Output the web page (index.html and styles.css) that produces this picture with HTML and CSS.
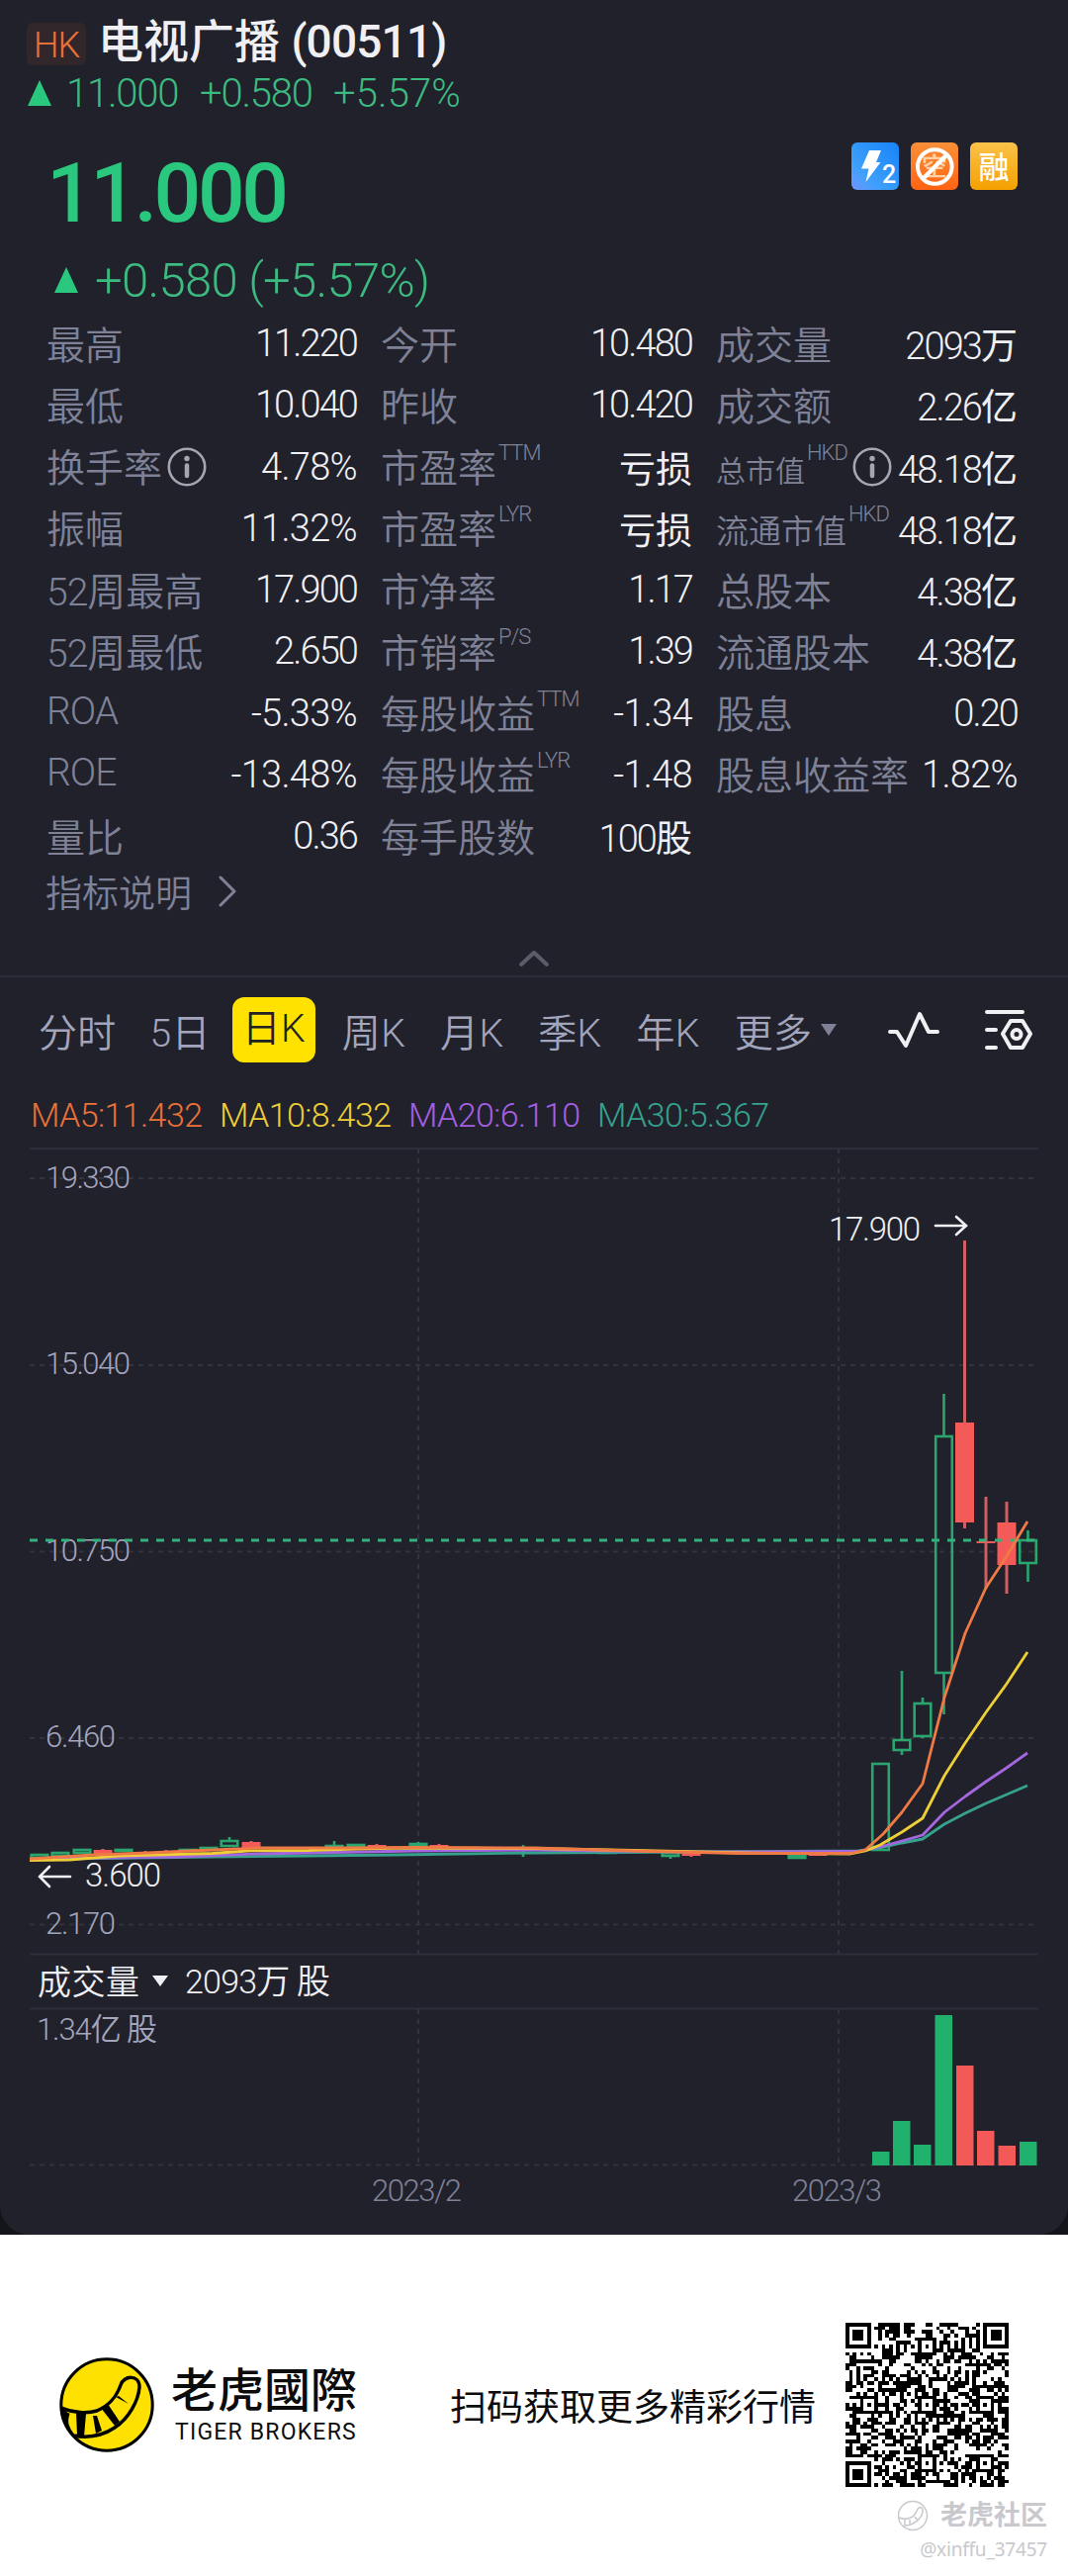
FILE: index.html
```html
<!DOCTYPE html>
<html lang="zh-CN">
<head>
    <meta charset="UTF-8">
    <meta name="viewport" content="width=device-width, initial-scale=1.0">
    <title>电视广播 (00511)</title>
    <link rel="stylesheet" href="styles.css">
</head>
<body>
    <div class="card-wrap">
    <main class="card">
        <header class="title-row">
            <span class="market">HK</span>
            <h1>电视广播 <span class="code">(00511)</span></h1>
        </header>
        <div class="sub-quote">
            <svg class="up" width="26" height="28" viewBox="0 0 26 28"><path d="M13 1L25 27H1Z"/></svg>
            <span>11.000</span>
            <span>+0.580</span>
            <span class="percent">+5.57%</span>
        </div>

        <section class="price-row">
            <div class="price">11.000</div>
            <div class="badges">
                <svg width="48" height="48" viewBox="0 0 48 48">
                    <defs><linearGradient id="blue" x1="0" y1="1" x2="1" y2="0"><stop offset="0" stop-color="#6f96ff"/><stop offset=".3" stop-color="#3fa0fb"/><stop offset="1" stop-color="#1683f8"/></linearGradient></defs>
                    <rect width="48" height="48" rx="6" fill="url(#blue)"/>
                    <path d="M18 8H30L25 20H29.500L14.500 40L17.500 26.500H10Z" fill="#fff"/>
                    <text x="31" y="41" class="badge-two">2</text>
                </svg>
                <svg width="48" height="48" viewBox="0 0 48 48">
                    <defs><linearGradient id="orange" x1="0" y1="0" x2="0" y2="1"><stop offset="0" stop-color="#f99038"/><stop offset="1" stop-color="#ff6313"/></linearGradient></defs>
                    <rect width="48" height="48" rx="6" fill="url(#orange)"/>
                    <text x="24" y="34" class="badge-short">空</text>
                    <circle cx="24.300" cy="24.500" r="17.300" fill="none" stroke="#fff" stroke-width="4"/>
                    <path d="M12.500 36.500L36.500 12.500" stroke="#fff" stroke-width="4.500"/>
                </svg>
                <svg width="48" height="48" viewBox="0 0 48 48">
                    <defs><linearGradient id="gold" x1="0" y1="0" x2="0" y2="1"><stop offset="0" stop-color="#fac34a"/><stop offset="1" stop-color="#f5a000"/></linearGradient></defs>
                    <rect width="48" height="48" rx="6" fill="url(#gold)"/>
                    <text x="24" y="36" class="badge-margin">融</text>
                </svg>
            </div>
        </section>
        <div class="change">
            <svg class="up" width="26" height="28" viewBox="0 0 26 28"><path d="M13 1L25 27H1Z"/></svg>
            <span>+0.580 (+5.57%)</span>
        </div>

        <section class="stats">
            <div class="stat"><span class="label">最高</span><span class="value">11.220</span></div>
            <div class="stat"><span class="label">今开</span><span class="value">10.480</span></div>
            <div class="stat"><span class="label">成交量</span><span class="value">2093<b>万</b></span></div>

            <div class="stat"><span class="label">最低</span><span class="value">10.040</span></div>
            <div class="stat"><span class="label">昨收</span><span class="value">10.420</span></div>
            <div class="stat"><span class="label">成交额</span><span class="value">2.26<b>亿</b></span></div>

            <div class="stat"><span class="label">换手率</span><svg class="info" width="40" height="40" viewBox="0 0 40 40"><circle cx="20" cy="20" r="18.200"/><path d="M20 18.500V29"/><circle class="dot" cx="20" cy="11.500" r="2.700"/></svg><span class="value wide">4.78%</span></div>
            <div class="stat"><span class="label">市盈率</span><sup>TTM</sup><span class="value"><b>亏损</b></span></div>
            <div class="stat"><span class="label small">总市值</span><sup>HKD</sup><svg class="info" width="40" height="40" viewBox="0 0 40 40"><circle cx="20" cy="20" r="18.200"/><path d="M20 18.500V29"/><circle class="dot" cx="20" cy="11.500" r="2.700"/></svg><span class="value">48.18<b>亿</b></span></div>

            <div class="stat"><span class="label">振幅</span><span class="value wide">11.32%</span></div>
            <div class="stat"><span class="label">市盈率</span><sup>LYR</sup><span class="value"><b>亏损</b></span></div>
            <div class="stat"><span class="label medium">流通市值</span><sup>HKD</sup><span class="value">48.18<b>亿</b></span></div>

            <div class="stat"><span class="label"><i>52</i>周最高</span><span class="value">17.900</span></div>
            <div class="stat"><span class="label">市净率</span><span class="value">1.17</span></div>
            <div class="stat"><span class="label">总股本</span><span class="value">4.38<b>亿</b></span></div>

            <div class="stat"><span class="label"><i>52</i>周最低</span><span class="value">2.650</span></div>
            <div class="stat"><span class="label">市销率</span><sup>P/S</sup><span class="value">1.39</span></div>
            <div class="stat"><span class="label">流通股本</span><span class="value">4.38<b>亿</b></span></div>

            <div class="stat"><span class="label"><i>ROA</i></span><span class="value wide">-5.33%</span></div>
            <div class="stat"><span class="label">每股收益</span><sup>TTM</sup><span class="value wide">-1.34</span></div>
            <div class="stat"><span class="label">股息</span><span class="value">0.20</span></div>

            <div class="stat"><span class="label"><i>ROE</i></span><span class="value wide">-13.48%</span></div>
            <div class="stat"><span class="label">每股收益</span><sup>LYR</sup><span class="value wide">-1.48</span></div>
            <div class="stat"><span class="label">股息收益率</span><span class="value wide">1.82%</span></div>

            <div class="stat"><span class="label">量比</span><span class="value">0.36</span></div>
            <div class="stat"><span class="label">每手股数</span><span class="value">100<b>股</b></span></div>
        </section>
        <div class="explain">
            <span>指标说明</span>
            <svg width="20" height="32" viewBox="0 0 20 32"><path d="M3 2L17 16L3 30"/></svg>
        </div>
        <div class="collapse">
            <svg width="32" height="20" viewBox="0 0 32 20"><path d="M3 16L16 4L29 16"/></svg>
        </div>

        <nav class="tabs">
            <span>分时</span>
            <span>5日</span>
            <span class="active">日K</span>
            <span>周K</span>
            <span>月K</span>
            <span>季K</span>
            <span>年K</span>
            <span class="more">更多<svg width="16" height="12" viewBox="0 0 16 12"><path d="M0 0H16L8 12Z"/></svg></span>
            <svg class="tool pulse" width="54" height="40" viewBox="0 0 54 40"><path d="M3 22H10L19 36L33 4L42 22H51"/></svg>
            <svg class="tool" width="50" height="46" viewBox="0 0 50 46"><path d="M3 5H39M3 23H12M3 41H12M27 14H39L47 27L39 41H27L19 27Z"/><circle cx="33" cy="27.500" r="4.500"/></svg>
        </nav>
        <div class="averages">
            <span class="ma5">MA5:11.432</span>
            <span class="ma10">MA10:8.432</span>
            <span class="ma20">MA20:6.110</span>
            <span class="ma30">MA30:5.367</span>
        </div>

        <!-- price and volume share one coordinate system -->
        <svg class="chart" width="1080" height="1099" viewBox="0 1160 1080 1099">
            <g class="frame">
                <path d="M30 1161H1050M30 1975.500H1050M30 2030.500H1050"/>
            </g>
            <g class="grid">
                <path d="M30 1191H1050M30 1380H1050M30 1568.500H1050M30 1757H1050M30 1945.500H1050M30 2188.500H1050"/>
                <path d="M423 1161V1975M848 1161V1975M423 2031V2188M848 2031V2188"/>
            </g>
            <g class="axis">
                <text x="46" y="1201" textLength="86">19.330</text>
                <text x="46" y="1389" textLength="86">15.040</text>
                <text x="46" y="1578" textLength="86">10.750</text>
                <text x="46" y="1766" textLength="71">6.460</text>
                <text x="46" y="1955" textLength="71">2.170</text>
            </g>
            <g id="candles"></g>
            <path class="last" d="M30 1557H1050"/>
            <g class="lines">
                <polyline class="ma30" points="30,1879 104,1878.500 215,1877 312,1876 400,1875 540,1873 700,1872 868,1871 890,1868 912,1863 933,1859 955,1844 976,1833 997,1823 1018,1814 1039,1805"/>
                <polyline class="ma20" points="30,1880 104,1878 180,1877 260,1874 312,1873 420,1871 540,1870 620,1871 700,1872 868,1871.500 890,1867 912,1861 933,1855 955,1832 976,1816 997,1801 1018,1787 1039,1772"/>
                <polyline class="ma10" points="30,1880.500 70,1880 120,1876 215,1873.500 250,1871 312,1870.500 360,1869 410,1868 540,1868.500 640,1870.500 750,1873 860,1874 875,1871 890,1865 912,1852 933,1838 955,1795 976,1762 997,1731 1018,1702 1039,1670"/>
                <polyline class="ma5" points="30,1879 95,1875 150,1873 215,1870 263,1868 312,1868 350,1868 420,1867.500 540,1868 640,1871 750,1873.500 860,1873.500 875,1870 893,1854 912,1832 933,1803 955,1716 976,1651 997,1605 1018,1573 1039,1538"/>
            </g>
            <g class="mark">
                <text x="838" y="1254" textLength="93">17.900</text>
                <path d="M946 1239H976M967 1230L977 1239L967 1248"/>
                <text x="86" y="1907" textLength="77">3.600</text>
                <path d="M71 1897H40M50 1887L40 1897L50 1907"/>
            </g>
            <g class="vol-title">
                <text x="38" y="2016" textLength="103">成交量</text>
                <path d="M154 1997H170L162 2008Z"/>
                <text x="187" y="2015" textLength="147">2093万 股</text>
            </g>
            <text class="vol-max" x="37" y="2062" textLength="122">1.34亿 股</text>
            <g id="volumes"></g>
            <g class="dates">
                <text x="376" y="2225" textLength="91">2023/2</text>
                <text x="801" y="2225" textLength="91">2023/3</text>
            </g>
        </svg>
    </main>
    </div>

    <footer class="footer">
        <svg width="96" height="96" viewBox="0 0 96 96">
            <defs><clipPath id="disc"><circle cx="48" cy="48" r="46"/></clipPath></defs>
            <circle cx="48" cy="48" r="46.200" fill="#fee100"/>
            <g clip-path="url(#disc)">
                <path d="M0 50L8 55L6 68L0 66Z"/>
                <path d="M17 56L27 57L25 80L18 79ZM34 59L38 59L43 74L37 77ZM42 51L49 47L61 65L56 69ZM57 40L60 39L70 47Z"/>
                <path class="tail" d="M2 51C14 56 28 57 38 54C52 48 58 39 62 28C65 18 81 17 81 30C80 44 70 62 56 71C44 79 30 82 14 79C9 73 5 66 9 56"/>
            </g>
            <circle cx="48" cy="48" r="46.200" fill="none" stroke="#000" stroke-width="3"/>
        </svg>
        <div class="brand">
            <strong>老虎國際</strong>
            <span>TIGER BROKERS</span>
        </div>
        <p>扫码获取更多精彩行情</p>
        <svg class="qr" id="qr" width="165" height="166" viewBox="0 0 45 45" preserveAspectRatio="none" shape-rendering="crispEdges"></svg>
        <div class="watermark">
            <div class="community">
                <svg width="32" height="32" viewBox="0 0 32 32"><circle cx="16" cy="16" r="14.500"/><path d="M2 18C10 21 18 18 20 11C22 6 27 7 26 12C25 19 17 26 7 26M8 20V25M13 20V25M18 17L21 21"/></svg>
                <span>老虎社区</span>
            </div>
            <div class="user">@xinffu_37457</div>
        </div>
    </footer>

    <script>
        // center, body top, body bottom, wick top, wick bottom, direction
        const candles = [
            [40, 1875, 1878, 1875, 1878, 'up'],
            [61, 1873, 1876, 1873, 1876, 'up'],
            [83, 1870, 1873, 1869, 1873, 'up'],
            [104, 1870, 1874, 1869, 1874, 'down'],
            [125, 1870, 1871, 1869, 1871, 'up'],
            [147, 1872, 1874, 1871, 1874, 'down'],
            [168, 1871, 1873, 1870, 1873, 'down'],
            [190, 1870, 1871, 1869, 1871, 'up'],
            [211, 1868, 1870, 1867, 1870, 'up'],
            [232, 1861, 1866, 1857, 1867, 'up'],
            [254, 1862, 1868, 1861, 1868, 'down'],
            [338, 1866, 1867, 1861, 1868, 'up'],
            [360, 1865, 1867, 1864, 1868, 'up'],
            [381, 1865, 1868, 1864, 1868, 'down'],
            [423, 1864, 1865, 1862, 1866, 'up'],
            [444, 1865, 1868, 1864, 1869, 'down'],
            [529, 1869, 1870, 1865, 1877, 'up'],
            [614, 1872, 1873, 1869, 1874, 'up'],
            [678, 1873, 1876, 1872, 1879, 'up'],
            [699, 1874, 1876, 1872, 1877, 'down'],
            [806, 1876, 1878, 1875, 1879, 'up'],
            [827, 1874, 1876, 1873, 1876, 'down'],
            [890.5, 1783, 1870, 1783, 1870, 'up'],
            [912, 1759, 1769, 1689, 1774, 'up'],
            [933, 1722, 1755, 1716, 1757, 'up'],
            [954.5, 1452, 1691, 1409, 1733, 'up'],
            [975.5, 1438, 1539, 1254, 1545, 'down'],
            [997, 1558, 1560, 1513, 1606, 'down'],
            [1018, 1539, 1582, 1518, 1611, 'down'],
            [1039.5, 1557, 1580, 1547, 1599, 'up']
        ];
        document.getElementById('candles').innerHTML = candles.map(([x, top, bottom, high, low, dir]) => {
            const wick = `M${x} ${high}V${top}M${x} ${bottom}V${low}`;
            const inset = dir === 'up' ? 1.2 : 0;
            return `<g class="${dir}"><path d="${wick}"/><rect x="${x - 9.5 + inset}" y="${top}" width="${19 - inset * 2}" height="${bottom - top}"/></g>`;
        }).join('');

        // left edge, top, direction
        const volumes = [
            [882, 2175, 'up'], [903, 2144, 'up'], [924, 2168, 'up'], [945.5, 2037, 'up'],
            [967, 2088, 'down'], [988, 2154, 'down'], [1009.5, 2169, 'down'], [1031, 2165, 'up']
        ];
        document.getElementById('volumes').innerHTML = volumes.map(([x, y, dir]) =>
            `<rect class="vol-${dir}" x="${x}" y="${y}" width="17.5" height="${2189 - y}"/>`).join('');

        // QR symbol, 45 modules a side
        const size = 45;
        const centers = [[6, 22], [22, 6], [22, 22], [22, 38], [38, 22], [38, 38]];
        let seed = 511;
        function ring(x, y, cx, cy) {
            return Math.max(Math.abs(x - cx), Math.abs(y - cy));
        }
        function isDark(x, y) {
            seed = (seed * 1103515245 + 12345) % 2147483648;
            for (const [cx, cy] of [[3, 3], [41, 3], [3, 41]]) {
                const r = ring(x, y, cx, cy);
                if (r <= 4) return r < 2 || r === 3;
            }
            for (const [cx, cy] of centers) {
                const r = ring(x, y, cx, cy);
                if (r <= 2) return r !== 1;
            }
            if (x === 6 || y === 6) return (x + y) % 2 === 0;
            return seed / 2147483648 < 0.52;
        }
        let path = '';
        for (let y = 0; y < size; y++) {
            for (let x = 0; x < size; x++) {
                if (isDark(x, y)) path += `M${x} ${y}h1v1h-1z`;
            }
        }
        document.getElementById('qr').innerHTML = `<path d="${path}"/>`;
    </script>
</body>
</html>
```

FILE: styles.css
```css
* {
    margin: 0;
    padding: 0;
    box-sizing: border-box;
}

body {
    width: 1080px;
    background: #fff;
    font-family: Roboto, 'Noto Sans CJK SC', sans-serif;
    font-weight: 350;
    color: #f0f0f4;
}

svg {
    display: block;
    flex: none;
}

.card-wrap {
    background: #14141b;
}

.card {
    height: 2259px;
    padding-top: 14px;
    background: #20212b;
    border-radius: 0 0 30px 30px;
    overflow: hidden;
}

.title-row {
    display: flex;
    align-items: center;
    height: 56px;
    padding-left: 27px;
    gap: 12px;
}

.market {
    width: 60px;
    height: 43px;
    margin-top: 4px;
    line-height: 46px;
    text-align: center;
    font-size: 36px;
    letter-spacing: -1px;
    color: #ea7139;
    background: #31272b;
    border-radius: 6px;
}

h1 {
    font-size: 46px;
    font-weight: 500;
    line-height: 56px;
    white-space: nowrap;
}

.code {
    letter-spacing: -0.8px;
}

.up {
    fill: #2ac77e;
}

.sub-quote {
    display: flex;
    align-items: center;
    height: 48px;
    padding-left: 27px;
    font-size: 40px;
    letter-spacing: -1.2px;
    color: #3dba80;
}

.sub-quote span {
    margin-left: 14px;
    width: 120px;
}

.sub-quote span + span {
    margin-left: 15px;
}

.sub-quote .percent {
    letter-spacing: 0.1px;
}

.price-row {
    display: flex;
    justify-content: space-between;
    height: 140px;
    padding: 26px 51px 0 47px;
}

.price {
    font-size: 84px;
    line-height: 104px;
    font-weight: 500;
    letter-spacing: -3.4px;
    color: #2ac77e;
}

.badges {
    display: flex;
    gap: 12px;
}

.badge-two {
    font-size: 25px;
    font-weight: 500;
    fill: #fff;
}

.badge-short {
    font-size: 26px;
    font-weight: 500;
    text-anchor: middle;
    fill: #ffd2a6;
}

.badge-margin {
    font-size: 31px;
    font-weight: 500;
    text-anchor: middle;
    fill: #fff;
}

.change {
    display: flex;
    align-items: center;
    height: 50px;
    padding-left: 54px;
    gap: 16px;
    font-size: 49px;
    letter-spacing: -0.7px;
    color: #3dba80;
}

.stats {
    display: grid;
    grid-template-columns: 314px 315px 305px;
    grid-auto-rows: 62.25px;
    column-gap: 24px;
    margin-top: 8px;
    padding-left: 47px;
}

.stat {
    display: flex;
    align-items: center;
    white-space: nowrap;
}

.label {
    margin-top: -3px;
    font-size: 39px;
    color: #7f8197;
}

.label i {
    font-style: normal;
    letter-spacing: -1px;
}

.label.small {
    font-size: 30px;
    margin-top: 5px;
}

.label.medium {
    font-size: 33px;
    margin-top: 2px;
}

sup {
    align-self: flex-start;
    margin: 3px 0 0 2px;
    font-size: 22px;
    line-height: 27px;
    letter-spacing: -1px;
    color: #7f8197;
}

.info {
    margin-left: 5px;
    fill: none;
    stroke: #a5a6b0;
    stroke-width: 2.6;
}

.info path {
    stroke-width: 4.5;
    stroke-linecap: round;
}

.info .dot {
    fill: #a5a6b0;
    stroke: none;
}

.value {
    margin-left: auto;
    font-size: 38px;
    letter-spacing: -1.9px;
}

.value.wide {
    letter-spacing: -0.7px;
}

.value b {
    font-size: 37px;
    font-weight: 400;
    letter-spacing: 0;
}

.explain {
    display: flex;
    align-items: center;
    height: 50px;
    padding-left: 46px;
    gap: 26px;
    font-size: 37px;
    color: #7f8197;
}

.explain svg,
.collapse svg {
    fill: none;
    stroke: #7f8197;
    stroke-width: 3;
    stroke-linecap: round;
    stroke-linejoin: round;
}

.collapse {
    display: flex;
    justify-content: center;
    height: 61.75px;
    padding-top: 33px;
    border-bottom: 2px solid #2b2c37;
}

.collapse svg {
    stroke: #5b5c69;
    stroke-width: 4;
}

.tabs {
    display: flex;
    align-items: center;
    height: 106px;
    padding-left: 39px;
    font-size: 39px;
    letter-spacing: 0.3px;
    color: #a3a5bd;
    white-space: nowrap;
}

.tabs span {
    margin-right: 34px;
}

.tabs .active {
    width: 84px;
    height: 66px;
    margin: 0 27px 0 -12px;
    line-height: 64px;
    text-align: center;
    color: #222;
    background: #ffe200;
    border-radius: 12px;
}

.tabs .active ~ span {
    margin-right: 35px;
}

.tabs .active ~ .more {
    display: flex;
    align-items: center;
    gap: 9px;
    margin-right: 51px;
}

.more svg {
    fill: #7f8197;
}

.tool {
    fill: none;
    stroke: #f0f0f2;
    stroke-width: 4;
    stroke-linecap: round;
    stroke-linejoin: round;
}

.pulse {
    margin-right: 44px;
}

.averages {
    display: flex;
    gap: 18px;
    height: 66px;
    padding: 0 0 0 31px;
    line-height: 66px;
    font-size: 34px;
    letter-spacing: -0.6px;
}

.averages span {
    width: 173px;
    white-space: nowrap;
}

.averages .ma5 { color: #ea7139; }
.averages .ma10 { color: #efcf38; }
.averages .ma20 { color: #a55fe2; }
.averages .ma30 { color: #36a18d; }

.frame path {
    stroke: #2d2e39;
    stroke-width: 2;
}

.grid path {
    fill: none;
    stroke: #32333d;
    stroke-width: 2;
    stroke-dasharray: 5 5;
}

.axis text {
    font-size: 31px;
    fill: #a3a5bd;
}

.last {
    stroke: #32b27a;
    stroke-width: 3;
    stroke-dasharray: 8 8;
}

.up path,
.up rect {
    stroke: #2ba56e;
    stroke-width: 2.6;
    fill: none;
}

.sub-quote .up path,
.change .up path {
    stroke: none;
    fill: #2ac77e;
}

.down path {
    stroke: #cf5f63;
    stroke-width: 3;
}

.down rect {
    fill: #f45b58;
}

.lines polyline {
    fill: none;
    stroke-width: 2.8;
    stroke-linejoin: round;
}

.lines .ma5 { stroke: #f07a45; }
.lines .ma10 { stroke: #efcf38; }
.lines .ma20 { stroke: #a567e0; }
.lines .ma30 { stroke: #36a18d; }

.mark text {
    font-size: 33px;
    fill: #f0f0f4;
}

.mark path {
    fill: none;
    stroke: #f0f0f4;
    stroke-width: 2.6;
    stroke-linecap: round;
}

.vol-title {
    font-size: 34px;
    fill: #f0f0f4;
}

.vol-max {
    font-size: 31px;
    fill: #a3a5bd;
}

.vol-up { fill: #20b26c; }
.vol-down { fill: #f25957; }

.dates text {
    font-size: 31px;
    fill: #7f8197;
}

.footer {
    position: relative;
    display: flex;
    align-items: center;
    height: 345px;
    padding-left: 60px;
    color: #0c0c0c;
}

.footer > svg,
.footer > div,
.footer > p {
    margin-bottom: 1px;
}

.tail {
    fill: none;
    stroke: #000;
    stroke-width: 3.5;
}

.brand {
    width: 190px;
    margin-left: 17px;
}

.brand strong {
    display: block;
    font-size: 47px;
    line-height: 56px;
    font-weight: 500;
    white-space: nowrap;
}

.brand span {
    display: block;
    margin-left: 4px;
    font-size: 23px;
    line-height: 28px;
    font-weight: 400;
    letter-spacing: 1.2px;
    white-space: nowrap;
}

.footer p {
    margin-left: 92px;
    font-size: 37px;
    font-weight: 400;
    white-space: nowrap;
}

.qr {
    margin-left: 30px;
}

/* overlaps the lower right corner of the footer */
.watermark {
    position: absolute;
    right: 21px;
    bottom: 9px;
    display: flex;
    flex-direction: column;
    align-items: flex-end;
    color: #c8c8cd;
}

.community {
    display: flex;
    align-items: center;
    gap: 12px;
    font-size: 27px;
    line-height: 36px;
    font-weight: 700;
}

.community svg {
    fill: none;
    stroke: #c8c8cd;
    stroke-width: 1.5;
}

.user {
    font-family: 'Noto Sans', sans-serif;
    font-size: 19px;
    line-height: 33px;
    font-weight: 400;
    letter-spacing: -0.2px;
}
```
